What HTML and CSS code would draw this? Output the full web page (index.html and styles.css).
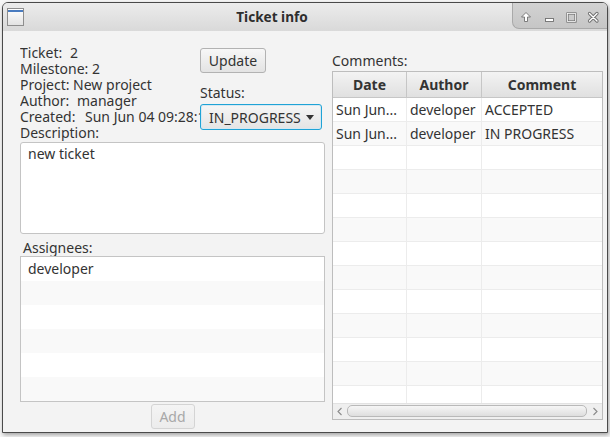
FILE: index.html
```html
<!DOCTYPE html>
<html>
<head>
<meta charset="utf-8">
<title>Ticket info</title>
<link rel="stylesheet" href="styles.css">
</head>
<body>
<div class="window">
  <div class="titlebar">
    <div class="app-icon"><div class="app-icon-bar"></div></div>
    <div class="title">Ticket info</div>
    <div class="controls">
      <svg width="95" height="26" viewBox="0 0 95 26">
        <path d="M14 9.5 L18.5 14 L15.5 14 L15.5 18.5 L12.5 18.5 L12.5 14 L9.5 14 Z" fill="#fff" stroke="#6f6f6f" stroke-width="0.9" stroke-linejoin="round"/>
        <rect x="33.5" y="15.5" width="8" height="3" fill="#fff" stroke="#6f6f6f" stroke-width="0.9"/>
        <rect x="55.5" y="10.5" width="8" height="8" fill="none" stroke="#6f6f6f" stroke-width="2.2"/>
        <rect x="55.5" y="10.5" width="8" height="8" fill="none" stroke="#fff" stroke-width="0.8"/>
        <path d="M77.5 10.5 L85 18 M85 10.5 L77.5 18" stroke="#6f6f6f" stroke-width="3.2" stroke-linecap="round"/>
        <path d="M77.5 10.5 L85 18 M85 10.5 L77.5 18" stroke="#fff" stroke-width="1.4" stroke-linecap="round"/>
      </svg>
    </div>
  </div>
  <div class="content">
    <div class="left">
      <div class="top">
        <div class="info">
          <div class="line"><span class="key k-ticket">Ticket:</span>2</div>
          <div class="line">Milestone: 2</div>
          <div class="line">Project: New project</div>
          <div class="line"><span class="key k-author">Author:</span>manager</div>
          <div class="line"><span class="key k-created">Created:</span>Sun Jun 04 09:28:17 EEST 2017</div>
          <div class="line">Description:</div>
        </div>
        <div class="actions">
          <button class="btn update">Update</button>
          <div class="status-label">Status:</div>
          <div class="combo"><span class="combo-text">IN_PROGRESS</span><span class="combo-arrow"></span></div>
        </div>
      </div>
      <div class="textarea">new ticket</div>
      <div class="assignees-label">Assignees:</div>
      <div class="list">
        <div class="list-row">developer</div>
        <div class="list-row"></div>
        <div class="list-row"></div>
        <div class="list-row"></div>
        <div class="list-row"></div>
        <div class="list-row"></div>
      </div>
      <div class="add-row"><button class="btn add" disabled>Add</button></div>
    </div>
    <div class="right">
      <div class="comments-label">Comments:</div>
      <div class="table">
        <div class="thead">
          <div class="th">Date</div>
          <div class="th">Author</div>
          <div class="th last">Comment</div>
        </div>
        <div class="tbody">
          <div class="tr"><div class="td">Sun Jun...</div><div class="td">developer</div><div class="td last">ACCEPTED</div></div>
          <div class="tr"><div class="td">Sun Jun...</div><div class="td">developer</div><div class="td last">IN PROGRESS</div></div>
          <div class="tr"><div class="td"></div><div class="td"></div><div class="td last"></div></div>
          <div class="tr"><div class="td"></div><div class="td"></div><div class="td last"></div></div>
          <div class="tr"><div class="td"></div><div class="td"></div><div class="td last"></div></div>
          <div class="tr"><div class="td"></div><div class="td"></div><div class="td last"></div></div>
          <div class="tr"><div class="td"></div><div class="td"></div><div class="td last"></div></div>
          <div class="tr"><div class="td"></div><div class="td"></div><div class="td last"></div></div>
          <div class="tr"><div class="td"></div><div class="td"></div><div class="td last"></div></div>
          <div class="tr"><div class="td"></div><div class="td"></div><div class="td last"></div></div>
          <div class="tr"><div class="td"></div><div class="td"></div><div class="td last"></div></div>
          <div class="tr"><div class="td"></div><div class="td"></div><div class="td last"></div></div>
          <div class="tr"><div class="td"></div><div class="td"></div><div class="td last"></div></div>
        </div>
        <div class="hscroll">
          <div class="sb-btn"><svg width="14" height="15" viewBox="0 0 14 15"><path d="M8.5 4 L5 7.5 L8.5 11" fill="none" stroke="#8a8a8a" stroke-width="1.1"/></svg></div>
          <div class="thumb"></div>
          <div class="sb-btn right"><svg width="15" height="15" viewBox="0 0 15 15"><path d="M6.5 4 L10 7.5 L6.5 11" fill="none" stroke="#8a8a8a" stroke-width="1.1"/></svg></div>
        </div>
      </div>
    </div>
  </div>
</div>
</body>
</html>
```

FILE: styles.css
```css
html, body {
  margin: 0;
  padding: 0;
}
body {
  width: 610px;
  height: 437px;
  overflow: hidden;
  position: relative;
  background: #f7f7f7;
  font-family: "Noto Sans", "Open Sans", sans-serif;
  font-size: 14px;
  color: #333333;
}
.window {
  position: absolute;
  left: 2px;
  top: 2px;
  width: 606px;
  height: 431px;
  box-sizing: border-box;
  border: 1px solid #4a4a4a;
  border-radius: 6px 6px 0 0;
  background: #f3f3f3;
  display: flex;
  flex-direction: column;
  overflow: hidden;
  box-shadow: 1px 2px 4px rgba(0, 0, 0, 0.35);
}
.titlebar {
  height: 28px;
  flex: none;
  display: flex;
  align-items: flex-start;
  background: linear-gradient(#ececec, #d9d9d9);
}
.app-icon {
  margin: 5px 0 0 4px;
  width: 15px;
  height: 16px;
  border: 1px solid #8e8e8e;
  background: linear-gradient(#ffffff, #e3e3e3);
  flex: none;
}
.app-icon-bar {
  height: 2px;
  margin-top: 1px;
  background: #4a7cc0;
}
.title {
  flex: 1;
  text-align: center;
  font-weight: bold;
  font-size: 13.6px;
  line-height: 28px;
  padding-left: 8px;
  color: #2e2e2e;
}
.controls {
  flex: none;
  width: 95px;
  height: 26px;
  box-sizing: border-box;
  border-left: 1px solid #a9a9a9;
  border-bottom: 1px solid #a9a9a9;
  border-radius: 0 0 0 7px;
  background: linear-gradient(#d2d2d2, #c6c6c6);
}
.controls svg {
  display: block;
  margin-left: -1px;
}
.content {
  flex: 1;
  display: flex;
  gap: 7px;
  padding: 14px 4px 0 17px;
}
.left {
  width: 305px;
  flex: none;
  display: flex;
  flex-direction: column;
}
.top {
  display: flex;
}
.info {
  width: 180px;
  overflow: hidden;
  white-space: nowrap;
}
.line {
  height: 16px;
  line-height: 16px;
}
.key {
  display: inline-block;
}
.k-ticket { width: 50px; }
.k-author { width: 57px; }
.k-created { width: 65px; }
.actions {
  display: flex;
  flex-direction: column;
  align-items: flex-start;
}
.btn {
  height: 25px;
  box-sizing: border-box;
  border: 1px solid #b2b2b2;
  border-radius: 3px;
  background: linear-gradient(#f7f7f7, #e3e3e3);
  font-family: inherit;
  font-size: 14px;
  color: #333333;
  padding: 0;
}
.update {
  margin-top: 3px;
  width: 66px;
}
.status-label {
  margin-top: 12px;
  line-height: 16px;
}
.combo {
  margin-top: 3px;
  width: 122px;
  height: 26px;
  box-sizing: border-box;
  border: 1px solid #1fa3d6;
  border-radius: 3px;
  box-shadow: inset 0 0 0 1px #d6e8f2;
  background: linear-gradient(#f6f6f6, #e4e4e4);
  display: flex;
  align-items: center;
  padding: 0 7px 0 8px;
}
.combo-text {
  flex: 1;
  white-space: nowrap;
}
.combo-arrow {
  width: 0;
  height: 0;
  border-left: 4px solid transparent;
  border-right: 4px solid transparent;
  border-top: 5px solid #333;
  margin-top: 1px;
}
.textarea {
  margin-top: 1px;
  height: 92px;
  box-sizing: border-box;
  border: 1px solid #c4c4c4;
  border-radius: 3px;
  background: #ffffff;
  padding: 3px 7px;
  line-height: 16px;
}
.assignees-label {
  margin-top: 6px;
  padding-left: 3px;
  line-height: 16px;
}
.list {
  height: 146px;
  box-sizing: border-box;
  border: 1px solid #c4c4c4;
  background: #ffffff;
}
.list-row {
  height: 24px;
  line-height: 24px;
  padding-left: 7px;
}
.list-row:nth-child(even) {
  background: #f9f9f9;
}
.add-row {
  display: flex;
  justify-content: center;
  margin-top: 2px;
}
.add {
  width: 44px;
  color: #a8a8a8;
  border-color: #d4d4d4;
  background: linear-gradient(#f4f4f4, #ececec);
}
.right {
  flex: 1;
  display: flex;
  flex-direction: column;
}
.comments-label {
  margin-top: 8px;
  line-height: 16px;
}
.table {
  margin-top: 2px;
  height: 349px;
  box-sizing: border-box;
  border: 1px solid #bdbdbd;
  background: #ffffff;
  display: flex;
  flex-direction: column;
}
.thead {
  flex: none;
  display: grid;
  grid-template-columns: 74px 75px 1fr;
  height: 26px;
  box-sizing: border-box;
  border-bottom: 1px solid #c6c6c6;
  background: linear-gradient(#f3f3f3, #e0e0e0);
}
.th {
  font-weight: bold;
  text-align: center;
  line-height: 25px;
  border-right: 1px solid #c6c6c6;
}
.th.last,
.td.last {
  border-right: none;
}
.tbody {
  flex: 1;
  overflow: hidden;
}
.tr {
  display: grid;
  grid-template-columns: 74px 75px 1fr;
  height: 24px;
  box-sizing: border-box;
  border-bottom: 1px solid #ececec;
}
.tr:nth-child(even) {
  background: #f9f9f9;
}
.td {
  border-right: 1px solid #ececec;
  line-height: 23px;
  padding-left: 3px;
  white-space: nowrap;
  overflow: hidden;
}
.hscroll {
  flex: none;
  height: 15px;
  display: flex;
  background: #efefef;
  border-top: 1px solid #e2e2e2;
}
.sb-btn {
  width: 14px;
  flex: none;
}
.sb-btn.right {
  width: 15px;
}
.sb-btn svg {
  display: block;
}
.thumb {
  flex: 1;
  margin: 1px 0 2px;
  border: 1px solid #b9b9b9;
  border-radius: 5px;
  background: linear-gradient(#f6f6f6, #dedede);
}
```
